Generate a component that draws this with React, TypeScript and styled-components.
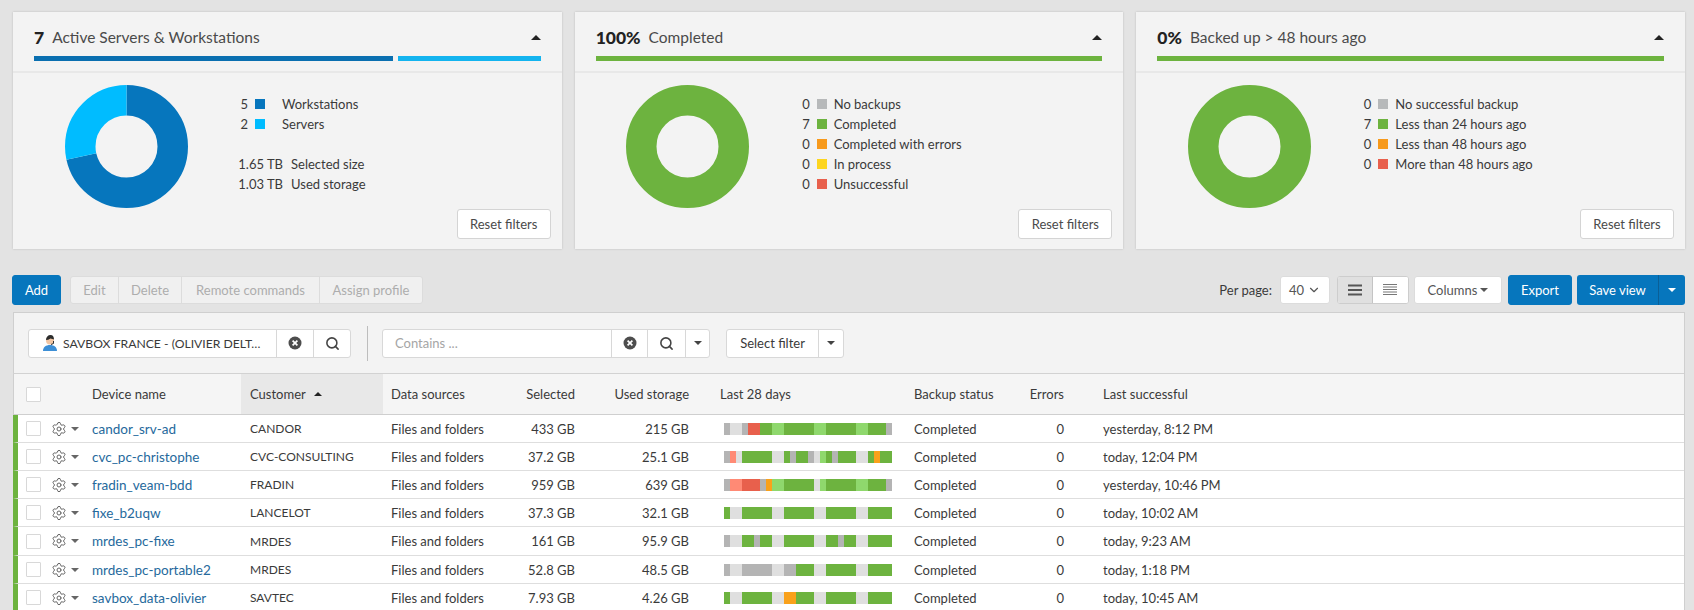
import React from "react";
import styled, { createGlobalStyle } from "styled-components";
import { ChevronDown, Search, Settings } from "lucide-react";

const GlobalStyle = createGlobalStyle`
  html, body {
    margin: 0;
    padding: 0;
    background: #e3e3e3;
  }
  * {
    box-sizing: border-box;
  }
`;

const FONT = `"Lato", "Liberation Sans", sans-serif`;
const BLUE = "#0676bd";
const SKY = "#00bcff";
const GREEN = "#6db33f";

const Page = styled.div`
  width: 1694px;
  height: 610px;
  overflow: hidden;
  padding: 12px 9px 0 13px;
  background: #e3e3e3;
  font-family: ${FONT};
  font-size: 13px;
  color: #3a3a3a;
`;

const Cards = styled.div`
  display: flex;
  gap: 13px;
`;

const Card = styled.section`
  width: 549px;
  height: 237px;
  background: #f3f3f3;
  box-shadow: 0 0 2px rgba(0, 0, 0, 0.18);
  display: flex;
  flex-direction: column;
`;

const CardHeader = styled.header`
  height: 61px;
  padding: 15px 21px 0 21px;
  border-bottom: 2px solid #e8e8e8;
`;

const CardTitleRow = styled.div`
  display: flex;
  align-items: center;
  height: 20px;
  margin-bottom: 9px;
`;

const CardCount = styled.strong`
  font-size: 17.5px;
  font-weight: 900;
  color: #222;
  margin-right: 8px;
`;

const CardTitle = styled.span`
  font-size: 15.5px;
  color: #4a4a4a;
  flex: 1;
`;

const Caret = styled.span<{ $up?: boolean; $color?: string; $size?: number }>`
  display: inline-block;
  width: 0;
  height: 0;
  border-left: ${(p) => p.$size ?? 4}px solid transparent;
  border-right: ${(p) => p.$size ?? 4}px solid transparent;
  ${(p) =>
    p.$up
      ? `border-bottom: ${p.$size ?? 4}px solid ${p.$color ?? "#222"};`
      : `border-top: ${p.$size ?? 4}px solid ${p.$color ?? "#222"};`}
`;

const Progress = styled.div`
  display: flex;
  gap: 5px;
  height: 5px;
`;

const ProgressPart = styled.div<{ $color: string; $grow: number }>`
  flex: ${(p) => p.$grow} 1 0;
  background: ${(p) => p.$color};
`;

const CardBody = styled.div`
  flex: 1;
  display: flex;
  padding: 12px 11px 10px 51.5px;
`;

const DonutBox = styled.svg`
  width: 123px;
  height: 123px;
  flex: none;
`;

const LegendBox = styled.div`
  margin: 9px 0 0 38.5px;
  flex: 1;
`;

const LegendRow = styled.div`
  display: flex;
  align-items: center;
  height: 20px;
`;

const LegendNum = styled.span`
  width: 22px;
  text-align: right;
`;

const Swatch = styled.span<{ $color: string }>`
  width: 10px;
  height: 10px;
  margin-left: 7px;
  background: ${(p) => p.$color};
`;

const LegendLabel = styled.span<{ $wide?: boolean }>`
  margin-left: ${(p) => (p.$wide ? 17 : 7)}px;
`;

const Stats = styled.div`
  margin-top: 20px;
`;

const StatValue = styled.span`
  width: 57px;
  text-align: right;
`;

const StatLabel = styled.span`
  margin-left: 8px;
`;

const Button = styled.button<{ $primary?: boolean }>`
  font-family: ${FONT};
  font-size: 13px;
  height: 30px;
  padding: 0 12px;
  border-radius: 3px;
  white-space: nowrap;
  border: 1px solid ${(p) => (p.$primary ? BLUE : "#d4d4d4")};
  background: ${(p) => (p.$primary ? BLUE : "#fff")};
  color: ${(p) => (p.$primary ? "#fff" : "#4a4a4a")};
`;

const ResetButton = styled(Button)`
  align-self: flex-end;
  width: 94px;
  padding: 0;
`;

const Toolbar = styled.div`
  display: flex;
  align-items: center;
  height: 30px;
  margin: 26px 0 7px -1px;
`;

const AddButton = styled(Button)`
  width: 49px;
  padding: 0;
`;

const DisabledGroup = styled.div`
  display: flex;
  height: 28px;
  margin-left: 9px;
  border: 1px solid #dcdcdc;
  border-radius: 3px;
  background: #f0f0f0;
`;

const DisabledItem = styled.span<{ $width: number }>`
  width: ${(p) => p.$width}px;
  display: flex;
  align-items: center;
  justify-content: center;
  color: #adadad;
  border-left: 1px solid #dcdcdc;
  &:first-child {
    border-left: 0;
  }
`;

const ToolbarRight = styled.div`
  margin-left: auto;
  display: flex;
  align-items: center;
`;

const PerPage = styled.span`
  margin-right: 8px;
`;

const WhiteBox = styled.div<{ $width: number; $gap?: number }>`
  width: ${(p) => p.$width}px;
  height: 28px;
  margin-right: ${(p) => p.$gap ?? 0}px;
  background: #fff;
  border: 1px solid #dcdcdc;
  border-radius: 3px;
  display: flex;
  align-items: center;
  justify-content: center;
  gap: 3px;
  color: #555;
`;

const ViewToggle = styled.div`
  display: flex;
  height: 28px;
  margin: 0 5px 0 7px;
  border: 1px solid #cdcdcd;
  border-radius: 3px;
  overflow: hidden;
  background: #fff;
`;

const ViewButton = styled.span<{ $active?: boolean }>`
  width: 35px;
  display: flex;
  align-items: center;
  justify-content: center;
  background: ${(p) => (p.$active ? "#e0e0e0" : "#fff")};
  border-right: ${(p) => (p.$active ? "1px solid #c4c4c4" : "0")};
`;

const SaveGroup = styled.div`
  display: flex;
  height: 30px;
  margin-left: 5px;
  background: ${BLUE};
  border-radius: 3px;
  color: #fff;
`;

const SaveLabel = styled.span`
  width: 82px;
  display: flex;
  align-items: center;
  justify-content: center;
  border-right: 1px solid #0a5f97;
`;

const SaveCaret = styled.span`
  width: 26px;
  display: flex;
  align-items: center;
  justify-content: center;
`;

const Panel = styled.div`
  border-top: 1px solid #cfcfcf;
  border-right: 1px solid #cfcfcf;
  background: #f3f3f3;
  width: 1672px;
`;

const FilterBar = styled.div`
  display: flex;
  align-items: center;
  height: 61px;
  padding: 0 0 0 14px;
  border-left: 1px solid #cfcfcf;
  border-bottom: 1px solid #d2d2d2;
`;

const Segmented = styled.div<{ $gap?: number }>`
  display: flex;
  height: 29px;
  margin-right: ${(p) => p.$gap ?? 0}px;
  background: #fff;
  border: 1px solid #d8d8d8;
  border-radius: 3px;
`;

const Segment = styled.div<{ $width: number; $left?: number }>`
  width: ${(p) => p.$width}px;
  display: flex;
  align-items: center;
  justify-content: ${(p) => (p.$left ? "flex-start" : "center")};
  padding-left: ${(p) => p.$left ?? 0}px;
  gap: 5px;
  border-left: 1px solid #d8d8d8;
  white-space: nowrap;
  &:first-child {
    border-left: 0;
  }
`;

const ChipText = styled.span`
  font-size: 12.2px;
`;

const Placeholder = styled.span`
  color: #a5a5a5;
`;

const FilterDivider = styled.span`
  width: 1px;
  height: 35px;
  margin: 0 14px 0 16px;
  background: #bdbdbd;
`;

const Row = styled.div<{ $head?: boolean }>`
  display: grid;
  grid-template-columns: 74px 149px 142px 122px 78px 114px 209px 116px 50px 1fr;
  height: ${(p) => (p.$head ? 41 : 28)}px;
  border-bottom: 1px solid ${(p) => (p.$head ? "#cfcfcf" : "#dedede")};
  border-left: ${(p) => (p.$head ? "1px solid #cfcfcf" : `5px solid ${GREEN}`)};
  padding-left: ${(p) => (p.$head ? 4 : 0)}px;
  background: ${(p) => (p.$head ? "#f5f5f5" : "#fff")};
  align-items: stretch;
  &:nth-child(7) {
    height: 29px;
  }
`;

const Cell = styled.div<{ $right?: boolean; $pad?: number; $sorted?: boolean; $caps?: boolean }>`
  display: flex;
  align-items: center;
  white-space: nowrap;
  justify-content: ${(p) => (p.$right ? "flex-end" : "flex-start")};
  padding: ${(p) => (p.$right ? `0 ${p.$pad ?? 8}px 0 0` : `0 0 0 ${p.$pad ?? 8}px`)};
  background: ${(p) => (p.$sorted ? "#e8e8e8" : "transparent")};
  font-size: ${(p) => (p.$caps ? 12 : 13)}px;
  gap: 8px;
`;

const SelectCell = styled.div`
  display: flex;
  align-items: center;
  padding-left: 8px;
  color: #666;
`;

const Check = styled.span`
  width: 15px;
  height: 15px;
  background: #fff;
  border: 1px solid #d8d8d8;
  border-radius: 1px;
  flex: none;
`;

const RowTools = styled.span`
  display: flex;
  align-items: center;
  gap: 4px;
  margin-left: 10px;
`;

const DeviceLink = styled.a`
  color: #25699c;
  font-size: 13.5px;
`;

const DayBar = styled.div`
  display: flex;
  height: 12px;
  margin-left: 4px;
`;

const DayBlock = styled.span<{ $tone: string; $days: number }>`
  width: ${(p) => p.$days * 6}px;
  background: ${(p) => p.$tone};
`;

const tones: Record<string, string> = {
  g: GREEN,
  l: "#8fd86d",
  a: "#b4b4b4",
  n: "#dfdfdf",
  r: "#e8604c",
  s: "#ff8a75",
  o: "#f9a11b",
};

type Device = {
  name: string;
  customer: string;
  selected: string;
  used: string;
  last: string;
  days: string;
};

// days: tone letter + how many days it covers, 28 in total
const devices: Device[] = [
  { name: "candor_srv-ad", customer: "CANDOR", selected: "433 GB", used: "215 GB", last: "yesterday, 8:12 PM", days: "a1 n2 a1 r2 g2 l2 g5 l2 g5 l2 g3 a1" },
  { name: "cvc_pc-christophe", customer: "CVC-CONSULTING", selected: "37.2 GB", used: "25.1 GB", last: "today, 12:04 PM", days: "a1 s1 n1 g5 n2 g1 a1 g2 a1 n1 l1 g1 a1 g3 n2 g1 o1 g2" },
  { name: "fradin_veam-bdd", customer: "FRADIN", selected: "959 GB", used: "639 GB", last: "yesterday, 10:46 PM", days: "a1 s2 r3 a1 o1 l2 g5 n1 l1 g5 l2 g3 a1" },
  { name: "fixe_b2uqw", customer: "LANCELOT", selected: "37.3 GB", used: "32.1 GB", last: "today, 10:02 AM", days: "g1 n2 g5 n2 g5 n2 g5 n2 g4" },
  { name: "mrdes_pc-fixe", customer: "MRDES", selected: "161 GB", used: "95.9 GB", last: "today, 9:23 AM", days: "a1 n2 g2 a1 g2 n2 g5 n2 g2 a1 g2 n2 g4" },
  { name: "mrdes_pc-portable2", customer: "MRDES", selected: "52.8 GB", used: "48.5 GB", last: "today, 1:18 PM", days: "a1 n2 a5 n2 a2 g3 n2 g5 n2 g4" },
  { name: "savbox_data-olivier", customer: "SAVTEC", selected: "7.93 GB", used: "4.26 GB", last: "today, 10:45 AM", days: "g1 n2 g5 n2 o2 g3 n2 g5 n2 g4" },
];

const Donut = ({ parts }: { parts: { value: number; color: string }[] }) => {
  const total = parts.reduce((s, p) => s + p.value, 0);
  const r = 46.25;
  const circ = 2 * Math.PI * r;
  let done = 0;
  return (
    <DonutBox viewBox="0 0 123 123">
      <g transform="rotate(-90 61.5 61.5)">
        {parts.map((p) => {
          const len = (p.value / total) * circ;
          const el = (
            <circle
              key={p.color}
              cx="61.5"
              cy="61.5"
              r={r}
              fill="none"
              stroke={p.color}
              strokeWidth="30.5"
              strokeDasharray={`${len} ${circ - len}`}
              strokeDashoffset={-done}
            />
          );
          done += len;
          return el;
        })}
      </g>
    </DonutBox>
  );
};

const ClearIcon = () => (
  <svg width="14" height="14" viewBox="0 0 14 14">
    <circle cx="7" cy="7" r="6.5" fill="#4d4d4d" />
    <path d="M4.6 4.6l4.8 4.8M9.4 4.6l-4.8 4.8" stroke="#fff" strokeWidth="1.7" />
  </svg>
);

const SupportIcon = () => (
  <svg width="16" height="18" viewBox="0 0 16 18">
    <path d="M1 17c0-4 3-6 7-6s7 2 7 6z" fill="#3d8fd6" />
    <circle cx="8" cy="6.5" r="4" fill="#f2c6a4" />
    <path d="M4 6c0-3 2-5 4.500-5S12 3 12 5.500L8.500 4.500C7 5.500 5.500 6 4 6z" fill="#2c2c2c" />
    <path d="M11.500 7v2.500L9 10.500" stroke="#2c2c2c" fill="none" strokeWidth="1" />
  </svg>
);

const ThickLines = () => (
  <svg width="14" height="12" viewBox="0 0 14 12">
    <path d="M0 1.500h14M0 6h14M0 10.500h14" stroke="#555" strokeWidth="2" />
  </svg>
);

const ThinLines = () => (
  <svg width="14" height="12" viewBox="0 0 14 12">
    <path d="M0 .5h14M0 3h14M0 5.500h14M0 8h14M0 10.500h14" stroke="#777" strokeWidth="1" />
  </svg>
);

const summary = [
  {
    count: "7",
    title: "Active Servers & Workstations",
    bars: [{ color: "#0a6fb0", grow: 359 }, { color: "#14b4ef", grow: 143 }],
    donut: [{ value: 5, color: BLUE }, { value: 2, color: SKY }],
    wide: true,
    legend: [
      { n: 5, color: BLUE, label: "Workstations" },
      { n: 2, color: SKY, label: "Servers" },
    ],
    stats: [
      { value: "1.65 TB", label: "Selected size" },
      { value: "1.03 TB", label: "Used storage" },
    ],
  },
  {
    count: "100%",
    title: "Completed",
    bars: [{ color: GREEN, grow: 1 }],
    donut: [{ value: 1, color: GREEN }],
    legend: [
      { n: 0, color: "#b7b9ba", label: "No backups" },
      { n: 7, color: GREEN, label: "Completed" },
      { n: 0, color: "#f79a1c", label: "Completed with errors" },
      { n: 0, color: "#fdd51f", label: "In process" },
      { n: 0, color: "#e8604c", label: "Unsuccessful" },
    ],
  },
  {
    count: "0%",
    title: "Backed up > 48 hours ago",
    bars: [{ color: GREEN, grow: 1 }],
    donut: [{ value: 1, color: GREEN }],
    legend: [
      { n: 0, color: "#b7b9ba", label: "No successful backup" },
      { n: 7, color: GREEN, label: "Less than 24 hours ago" },
      { n: 0, color: "#f79a1c", label: "Less than 48 hours ago" },
      { n: 0, color: "#e8604c", label: "More than 48 hours ago" },
    ],
  },
];

export default function App() {
  return (
    <Page>
      <GlobalStyle />
      <Cards>
        {summary.map((c) => (
          <Card key={c.title}>
            <CardHeader>
              <CardTitleRow>
                <CardCount>{c.count}</CardCount>
                <CardTitle>{c.title}</CardTitle>
                <Caret $up $size={5} />
              </CardTitleRow>
              <Progress>
                {c.bars.map((b) => (
                  <ProgressPart key={b.color} $color={b.color} $grow={b.grow} />
                ))}
              </Progress>
            </CardHeader>
            <CardBody>
              <Donut parts={c.donut} />
              <LegendBox>
                {c.legend.map((l) => (
                  <LegendRow key={l.label}>
                    <LegendNum>{l.n}</LegendNum>
                    <Swatch $color={l.color} />
                    <LegendLabel $wide={c.wide}>{l.label}</LegendLabel>
                  </LegendRow>
                ))}
                {c.stats && (
                  <Stats>
                    {c.stats.map((s) => (
                      <LegendRow key={s.label}>
                        <StatValue>{s.value}</StatValue>
                        <StatLabel>{s.label}</StatLabel>
                      </LegendRow>
                    ))}
                  </Stats>
                )}
              </LegendBox>
              <ResetButton>Reset filters</ResetButton>
            </CardBody>
          </Card>
        ))}
      </Cards>

      <Toolbar>
        <AddButton $primary>Add</AddButton>
        <DisabledGroup>
          <DisabledItem $width={47}>Edit</DisabledItem>
          <DisabledItem $width={63}>Delete</DisabledItem>
          <DisabledItem $width={138}>Remote commands</DisabledItem>
          <DisabledItem $width={103}>Assign profile</DisabledItem>
        </DisabledGroup>
        <ToolbarRight>
          <PerPage>Per page:</PerPage>
          <WhiteBox $width={50}>
            40 <ChevronDown size={14} />
          </WhiteBox>
          <ViewToggle>
            <ViewButton $active>
              <ThickLines />
            </ViewButton>
            <ViewButton>
              <ThinLines />
            </ViewButton>
          </ViewToggle>
          <WhiteBox $width={88} $gap={6}>
            Columns <Caret $color="#555" />
          </WhiteBox>
          <Button $primary>Export</Button>
          <SaveGroup>
            <SaveLabel>Save view</SaveLabel>
            <SaveCaret>
              <Caret $color="#fff" />
            </SaveCaret>
          </SaveGroup>
        </ToolbarRight>
      </Toolbar>

      <Panel>
        <FilterBar>
          <Segmented>
            <Segment $width={247} $left={13}>
              <SupportIcon />
              <ChipText>SAVBOX FRANCE - (OLIVIER DELT…</ChipText>
            </Segment>
            <Segment $width={37}>
              <ClearIcon />
            </Segment>
            <Segment $width={37}>
              <Search size={15} color="#444" strokeWidth={2.5} />
            </Segment>
          </Segmented>
          <FilterDivider />
          <Segmented $gap={16}>
            <Segment $width={228} $left={12}>
              <Placeholder>Contains ...</Placeholder>
            </Segment>
            <Segment $width={36}>
              <ClearIcon />
            </Segment>
            <Segment $width={38}>
              <Search size={15} color="#444" strokeWidth={2.5} />
            </Segment>
            <Segment $width={24}>
              <Caret $color="#444" />
            </Segment>
          </Segmented>
          <Segmented>
            <Segment $width={91}>Select filter</Segment>
            <Segment $width={25}>
              <Caret $color="#444" />
            </Segment>
          </Segmented>
        </FilterBar>

        <Row $head>
          <SelectCell>
            <Check />
          </SelectCell>
          <Cell $pad={0}>Device name</Cell>
          <Cell $pad={9} $sorted>
            Customer <Caret $up $size={4} />
          </Cell>
          <Cell>Data sources</Cell>
          <Cell $right>Selected</Cell>
          <Cell $right>Used storage</Cell>
          <Cell $pad={23}>Last 28 days</Cell>
          <Cell>Backup status</Cell>
          <Cell $right>Errors</Cell>
          <Cell $pad={31}>Last successful</Cell>
        </Row>

        {devices.map((d) => (
          <Row key={d.name}>
            <SelectCell>
              <Check />
              <RowTools>
                <Settings size={16} strokeWidth={1.5} />
                <Caret $color="#666" $size={4.5} />
              </RowTools>
            </SelectCell>
            <Cell $pad={0}>
              <DeviceLink>{d.name}</DeviceLink>
            </Cell>
            <Cell $pad={9} $caps>
              {d.customer}
            </Cell>
            <Cell>Files and folders</Cell>
            <Cell $right>{d.selected}</Cell>
            <Cell $right>{d.used}</Cell>
            <Cell $pad={23}>
              <DayBar>
                {d.days.split(" ").map((b, i) => (
                  <DayBlock key={i} $tone={tones[b[0]]} $days={Number(b.slice(1))} />
                ))}
              </DayBar>
            </Cell>
            <Cell>Completed</Cell>
            <Cell $right>0</Cell>
            <Cell $pad={31}>{d.last}</Cell>
          </Row>
        ))}
      </Panel>
    </Page>
  );
}
